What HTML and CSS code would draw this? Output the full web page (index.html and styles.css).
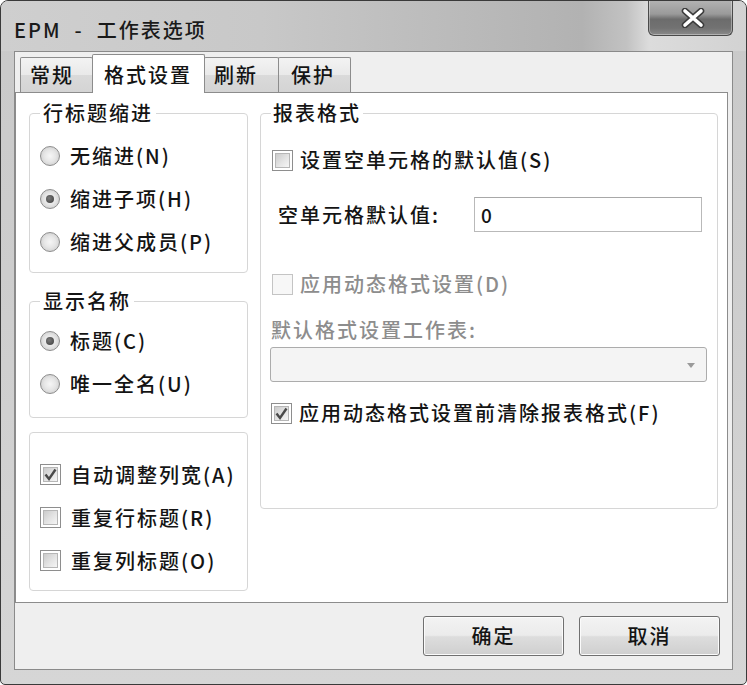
FILE: index.html
```html
<!DOCTYPE html>
<html lang="zh-CN">
<head>
<meta charset="utf-8">
<title>EPM - 工作表选项</title>
<link rel="stylesheet" href="styles.css">
</head>
<body>
<div class="window">
  <div class="titlebar">
    <div class="title">EPM&nbsp;&nbsp;-&nbsp;&nbsp;工作表选项</div>
    <div class="close">
      <svg width="26" height="20" viewBox="0 0 26 20">
        <path d="M5 3 L21 17 M21 3 L5 17" stroke="#3c3c3c" stroke-width="6.5" stroke-linecap="round" fill="none"/>
        <path d="M5 3 L21 17 M21 3 L5 17" stroke="#ffffff" stroke-width="3.6" stroke-linecap="round" fill="none"/>
      </svg>
    </div>
  </div>
  <div class="client">
    <div class="tabs">
      <div class="tab tab-a">常规</div>
      <div class="tab tab-b active">格式设置</div>
      <div class="tab tab-c">刷新</div>
      <div class="tab tab-d">保护</div>
    </div>
    <div class="panel">
      <div class="col-left">
        <fieldset class="group g1">
          <legend>行标题缩进</legend>
          <div class="opt"><span class="radio"></span><span>无缩进(N)</span></div>
          <div class="opt"><span class="radio on"></span><span>缩进子项(H)</span></div>
          <div class="opt"><span class="radio"></span><span>缩进父成员(P)</span></div>
        </fieldset>
        <fieldset class="group g2">
          <legend>显示名称</legend>
          <div class="opt"><span class="radio on"></span><span>标题(C)</span></div>
          <div class="opt"><span class="radio"></span><span>唯一全名(U)</span></div>
        </fieldset>
        <div class="group g3">
          <div class="opt"><span class="check on"><svg width="15" height="15" viewBox="0 0 15 15"><path d="M2.5 7.5 L6 12 L12.5 2.5" stroke="#4a4a4a" stroke-width="2.4" fill="none"/></svg></span><span>自动调整列宽(A)</span></div>
          <div class="opt"><span class="check"></span><span>重复行标题(R)</span></div>
          <div class="opt"><span class="check"></span><span>重复列标题(O)</span></div>
        </div>
      </div>
      <fieldset class="group report">
        <legend>报表格式</legend>
        <div class="row r1"><span class="check"></span><span>设置空单元格的默认值(S)</span></div>
        <div class="row r2"><span class="field-label">空单元格默认值:</span><span class="input">0</span></div>
        <div class="row r3 disabled"><span class="check dis"></span><span>应用动态格式设置(D)</span></div>
        <div class="row r4 disabled">默认格式设置工作表:</div>
        <div class="combo"><span class="arrow"></span></div>
        <div class="row r6"><span class="check on"><svg width="15" height="15" viewBox="0 0 15 15"><path d="M2.5 7.5 L6 12 L12.5 2.5" stroke="#4a4a4a" stroke-width="2.4" fill="none"/></svg></span><span>应用动态格式设置前清除报表格式(F)</span></div>
      </fieldset>
    </div>
    <div class="footer">
      <button class="btn">确定</button>
      <button class="btn">取消</button>
    </div>
  </div>
</div>
</body>
</html>
```
FILE: styles.css
```css
* { box-sizing: border-box; }

html, body {
  margin: 0;
  padding: 0;
  background: #ffffff;
}

body {
  font-family: "Noto Sans CJK SC", "Noto Sans", "Liberation Sans", sans-serif;
  font-size: 20px;
  font-weight: 500;
  letter-spacing: 2px;
  color: #141414;
}

.window {
  width: 747px;
  height: 685px;
  border: 1px solid #3a3a3a;
  border-radius: 8px 8px 5px 5px;
  background: linear-gradient(180deg, #c9c9c9 0%, #cdcdcd 40%, #d6d6d6 100%);
  overflow: hidden;
}

.titlebar {
  height: 50px;
  display: flex;
  align-items: flex-start;
  background: linear-gradient(90deg, #cfcfcf 0%, #c8c8c8 35%, #bababa 62%, #b2b2b2 78%, #c2c2c2 84%, #dcdcdc 87%, #d2d2d2 100%);
}

.title {
  margin-top: 17px;
  margin-left: 13px;
  line-height: 24px;
  white-space: nowrap;
  color: #1a1a1a;
}

.close {
  margin-left: auto;
  margin-right: 13px;
  margin-top: -1px;
  width: 85px;
  height: 36px;
  border: 1px solid #4a4a4a;
  border-top: none;
  border-radius: 0 0 6px 6px;
  background: linear-gradient(180deg, #b4b4b4 0%, #9a9a9a 40%, #6c6c6c 55%, #727272 80%, #8a8a8a 100%);
  box-shadow: inset 0 0 0 1px rgba(255,255,255,0.35);
  display: flex;
  align-items: center;
  justify-content: center;
  padding-left: 4px;
}

.client {
  margin: 0 13px 14px 13px;
  height: 619px;
  border: 1px solid #8a8a8a;
  background: #efefef;
  display: flex;
  flex-direction: column;
}

.tabs {
  margin-top: 2px;
  height: 38px;
  padding-left: 5px;
  display: flex;
  align-items: flex-end;
}

.tab {
  height: 35px;
  border: 1px solid #8c8c8c;
  border-bottom: none;
  border-radius: 2px 2px 0 0;
  background: linear-gradient(180deg, #f3f3f3 0%, #e9e9e9 50%, #dadada 51%, #d4d4d4 100%);
  line-height: 34px;
  padding-left: 9px;
  white-space: nowrap;
  margin-left: -1px;
}

.tab-a { width: 73px; margin-left: 0; }
.tab-b { width: 113px; padding-left: 11px; }
.tab-c { width: 75px; }
.tab-d { width: 73px; padding-left: 12px; }

.tab.active {
  height: 39px;
  margin-bottom: -1px;
  background: #ffffff;
  position: relative;
  z-index: 1;
  line-height: 40px;
}

.panel {
  width: 713px;
  height: 511px;
  border: 1px solid #8c8c8c;
  background: #ffffff;
  padding: 8px 0 0 13px;
  display: flex;
  gap: 12px;
  align-items: flex-start;
}

.col-left {
  width: 219px;
  display: flex;
  flex-direction: column;
}

.group {
  margin: 0;
  border: 1px solid #d6d6d6;
  border-radius: 4px;
  min-width: 0;
}

legend {
  padding: 0 3px;
  margin-left: 0;
  height: 24px;
  line-height: 24px;
  color: #141414;
}

.report legend {
  padding: 0 2px;
  margin-left: -1px;
}

.g1 { padding: 9px 0 9px 10px; }
.g2 { padding: 6px 0 12px 10px; margin-top: 16px; }
.g3 { padding: 20px 0 8px 10px; margin-top: 14px; }

.opt {
  height: 43px;
  display: flex;
  align-items: center;
  gap: 10px;
  white-space: nowrap;
  line-height: 24px;
}

.radio {
  width: 20px;
  height: 20px;
  border-radius: 50%;
  border: 1px solid #8d8d8d;
  background: radial-gradient(circle at 50% 50%, #f6f6f6 0%, #e6e6e6 45%, #c4c4c4 100%);
  flex: none;
  position: relative;
}

.radio.on::after {
  content: "";
  position: absolute;
  left: 5px;
  top: 5px;
  width: 8px;
  height: 8px;
  border-radius: 50%;
  background: radial-gradient(circle at 40% 40%, #7a7a7a 0%, #3a3a3a 100%);
}

.check {
  width: 21px;
  height: 21px;
  border: 1px solid #8e8e8e;
  background: #f7f7f7;
  box-shadow: inset 0 0 0 2px #ffffff, inset 0 0 0 3px #b6b6b6;
  flex: none;
  display: flex;
  align-items: center;
  justify-content: center;
  position: relative;
}

.check::before {
  content: "";
  position: absolute;
  left: 3px;
  top: 3px;
  right: 3px;
  bottom: 3px;
  background: linear-gradient(135deg, #cbcbcb 0%, #e4e4e4 55%, #f5f5f5 100%);
}

.check svg {
  position: relative;
  z-index: 1;
}

.check.dis {
  border-color: #c4c4c4;
  box-shadow: none;
}

.check.dis::before {
  background: #f7f7f7;
}

.report {
  width: 458px;
  height: 408px;
  padding: 0 10px 0 11px;
}

.row {
  display: flex;
  align-items: center;
  white-space: nowrap;
  line-height: 24px;
}

.r1 { height: 30px; margin-top: 20px; gap: 7px; }
.r2 { height: 35px; margin-top: 22px; }
.r3 { height: 30px; margin-top: 37px; gap: 7px; }
.r4 { height: 24px; margin-top: 19px; margin-left: -1px; }
.r6 { height: 30px; margin-top: 16px; gap: 7px; margin-left: -1px; }

.disabled { color: #8d8d8d; }

.field-label { margin-left: 6px; }

.input {
  margin-left: auto;
  margin-right: 5px;
  width: 228px;
  height: 35px;
  border: 1px solid #b9b9b9;
  border-top-color: #a8a8a8;
  background: #ffffff;
  padding-left: 6px;
  line-height: 33px;
  font-size: 19px;
}

.combo {
  margin-top: 5px;
  margin-left: -2px;
  width: 437px;
  height: 35px;
  border: 1px solid #acacac;
  border-radius: 3px;
  background: #f4f4f4;
  position: relative;
}

.arrow {
  position: absolute;
  right: 11px;
  top: 15px;
  width: 0;
  height: 0;
  border-left: 4px solid transparent;
  border-right: 4px solid transparent;
  border-top: 5px solid #9a9a9a;
}

.footer {
  display: flex;
  justify-content: flex-end;
  gap: 15px;
  padding: 13px 12px 0 0;
}

.btn {
  width: 141px;
  height: 40px;
  border: 1px solid #707070;
  border-radius: 3px;
  background: linear-gradient(180deg, #f3f3f3 0%, #ebebeb 48%, #dddddd 52%, #cfcfcf 100%);
  box-shadow: inset 0 0 0 1px #fbfbfb;
  font-family: "Noto Sans CJK SC", "Noto Sans", sans-serif;
  font-size: 20px;
  font-weight: 500;
  letter-spacing: 2px;
  color: #141414;
  padding: 0;
  line-height: 38px;
}
```
